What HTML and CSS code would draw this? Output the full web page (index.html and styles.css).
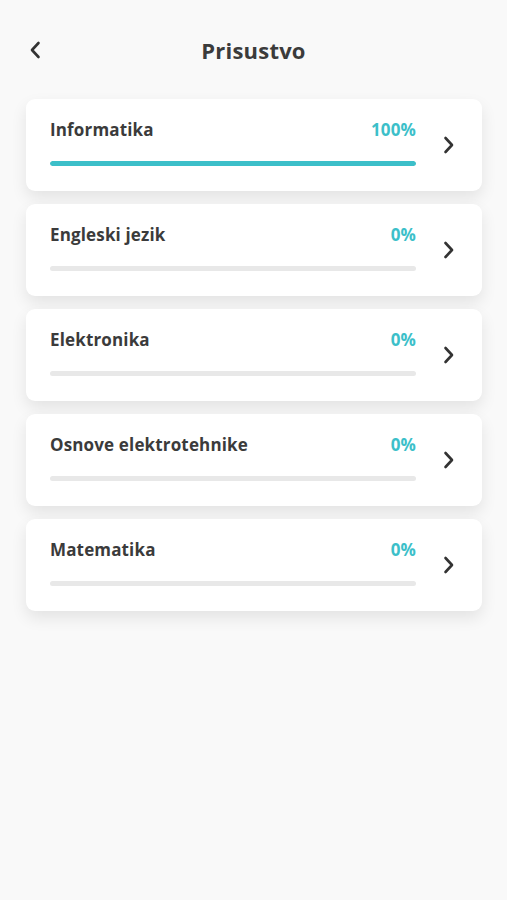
FILE: index.html
```html
<!DOCTYPE html>
<html>
<head>
<meta charset="utf-8">
<title>Prisustvo</title>
<link rel="stylesheet" href="styles.css">
</head>
<body>
<header class="topbar">
  <a class="back" href="#">
    <svg width="12" height="18" viewBox="0 0 12 18"><path d="M9.5 2 L3 9 L9.5 16" fill="none" stroke="#333" stroke-width="2.6" stroke-linecap="round" stroke-linejoin="round"/></svg>
  </a>
  <h1>Prisustvo</h1>
</header>

<main class="list">
  <div class="card">
    <div class="info">
      <div class="row"><span class="name">Informatika</span><span class="pct">100%</span></div>
      <div class="track"><div class="fill" style="width:100%"></div></div>
    </div>
    <svg class="chev" width="12" height="18" viewBox="0 0 12 18"><path d="M2.5 2 L9 9 L2.5 16" fill="none" stroke="#333" stroke-width="2.6" stroke-linecap="round" stroke-linejoin="round"/></svg>
  </div>
  <div class="card">
    <div class="info">
      <div class="row"><span class="name">Engleski jezik</span><span class="pct">0%</span></div>
      <div class="track"><div class="fill" style="width:0%"></div></div>
    </div>
    <svg class="chev" width="12" height="18" viewBox="0 0 12 18"><path d="M2.5 2 L9 9 L2.5 16" fill="none" stroke="#333" stroke-width="2.6" stroke-linecap="round" stroke-linejoin="round"/></svg>
  </div>
  <div class="card">
    <div class="info">
      <div class="row"><span class="name">Elektronika</span><span class="pct">0%</span></div>
      <div class="track"><div class="fill" style="width:0%"></div></div>
    </div>
    <svg class="chev" width="12" height="18" viewBox="0 0 12 18"><path d="M2.5 2 L9 9 L2.5 16" fill="none" stroke="#333" stroke-width="2.6" stroke-linecap="round" stroke-linejoin="round"/></svg>
  </div>
  <div class="card">
    <div class="info">
      <div class="row"><span class="name">Osnove elektrotehnike</span><span class="pct">0%</span></div>
      <div class="track"><div class="fill" style="width:0%"></div></div>
    </div>
    <svg class="chev" width="12" height="18" viewBox="0 0 12 18"><path d="M2.5 2 L9 9 L2.5 16" fill="none" stroke="#333" stroke-width="2.6" stroke-linecap="round" stroke-linejoin="round"/></svg>
  </div>
  <div class="card">
    <div class="info">
      <div class="row"><span class="name">Matematika</span><span class="pct">0%</span></div>
      <div class="track"><div class="fill" style="width:0%"></div></div>
    </div>
    <svg class="chev" width="12" height="18" viewBox="0 0 12 18"><path d="M2.5 2 L9 9 L2.5 16" fill="none" stroke="#333" stroke-width="2.6" stroke-linecap="round" stroke-linejoin="round"/></svg>
  </div>
</main>
</body>
</html>
```

FILE: styles.css
```css
html {
  background-color: #f9f9f9;
}

body {
  margin: 0;
  min-height: 900px;
  background-color: #f9f9f9;
  font-family: "Open Sans", "Noto Sans", sans-serif;
  color: #3b3b3b;
}

.topbar {
  height: 99px;
  display: flex;
  align-items: center;
  justify-content: center;
  position: relative;
}

.back {
  position: absolute;
  left: 29px;
  top: 41px;
  display: block;
  line-height: 0;
}

.topbar h1 {
  margin: 0;
  font-size: 22px;
  line-height: 30px;
  font-weight: 700;
  letter-spacing: 0.2px;
  color: #3b3b3b;
}

.list {
  display: flex;
  flex-direction: column;
  gap: 13px;
  padding: 0 25px 40px 26px;
}

.card {
  height: 92px;
  box-sizing: border-box;
  background: #fff;
  border-radius: 9px;
  box-shadow: 0 7px 16px rgba(0, 0, 0, 0.09);
  display: flex;
  align-items: center;
  padding: 0 27px 0 24px;
}

.info {
  flex: 1;
  margin-right: 27px;
  align-self: flex-start;
  padding-top: 20px;
}

.row {
  display: flex;
  justify-content: space-between;
  align-items: baseline;
  font-size: 17px;
  font-weight: 700;
  line-height: 22px;
  letter-spacing: 0.15px;
}

.pct {
  color: #3cbfc9;
}

.track {
  margin-top: 20px;
  height: 5px;
  border-radius: 3px;
  background: #e8e8e8;
  overflow: hidden;
}

.fill {
  height: 100%;
  background: #3cbfc9;
  border-radius: 3px;
}

.chev {
  flex: none;
}
```
